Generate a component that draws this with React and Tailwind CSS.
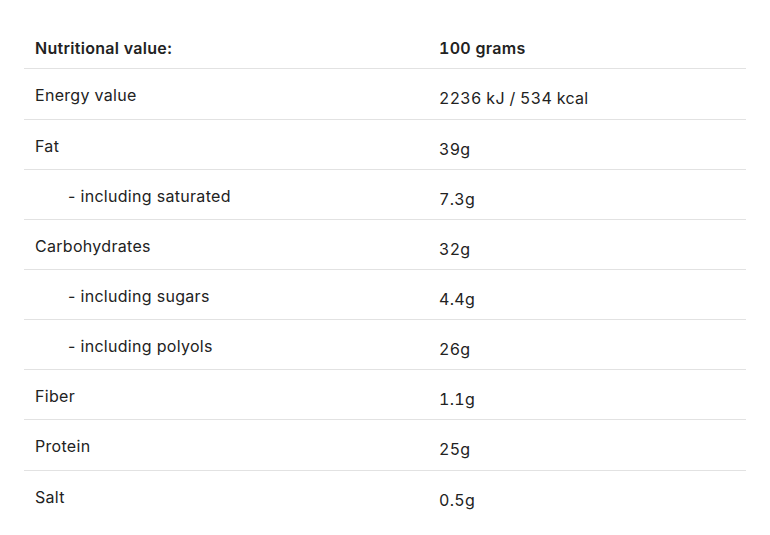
export default function App() {
  const rows = [
    ["Energy value", "2236 kJ / 534 kcal", false, "h-[51px]"],
    ["Fat", "39g", false, "h-[50px]"],
    ["- including saturated", "7.3g", true, "h-[50px]"],
    ["Carbohydrates", "32g", false, "h-[50px]"],
    ["- including sugars", "4.4g", true, "h-[50px]"],
    ["- including polyols", "26g", true, "h-[50px]"],
    ["Fiber", "1.1g", false, "h-[50px]"],
    ["Protein", "25g", false, "h-[51px]"],
    ["Salt", "0.5g", false, "h-[50px]"],
  ];
  return (
    <div className="w-[770px] h-[535px] bg-white pt-[19px] px-[24px] text-[#222] text-[16px] leading-[24px] tracking-[0.3px]" style={{ fontFamily: "Inter, 'Liberation Sans', sans-serif" }}>
      <div className="flex h-[50px] items-start font-semibold border-b border-[#e2e2e2]">
        <div className="w-[404px] pl-[11px] pt-[17px]">Nutritional value:</div>
        <div className="flex-1 pl-[11px] pt-[17px] tabular-nums">100 grams</div>
      </div>
      {rows.map(([l, v, ind, h], i) => (
        <div key={i} className={`flex ${h} items-start ${i < rows.length - 1 ? "border-b border-[#e2e2e2]" : ""}`}>
          <div className={`w-[404px] ${ind ? "pl-[44px]" : "pl-[11px]"} pt-[14px]`}>{l}</div>
          <div className="flex-1 pl-[11px] pt-[17px] tabular-nums">{v}</div>
        </div>
      ))}
    </div>
  );
}
